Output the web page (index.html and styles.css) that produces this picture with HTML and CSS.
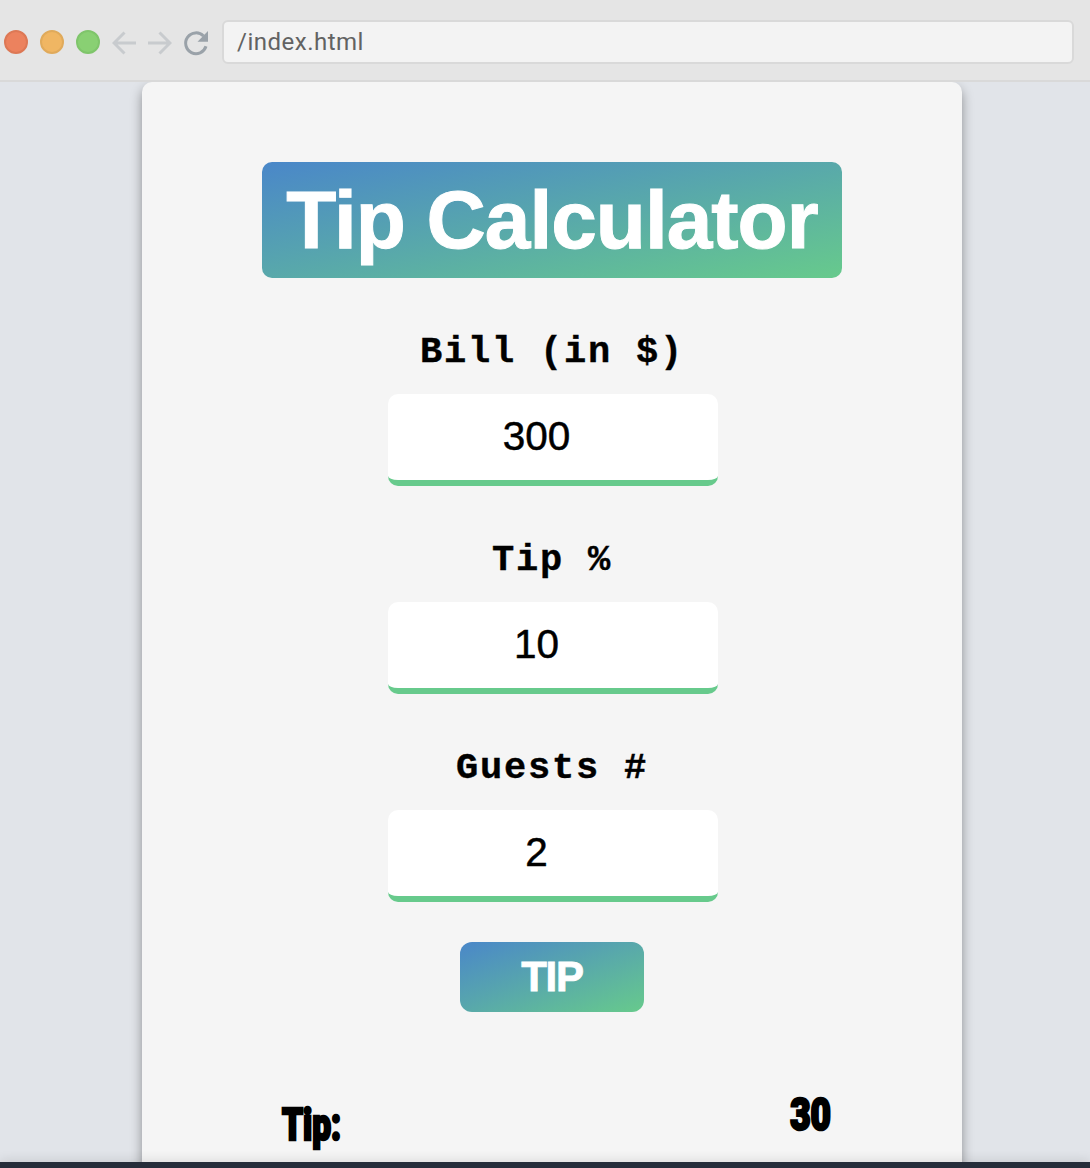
FILE: index.html
```html
<!DOCTYPE html>
<html lang="en">
<head>
<meta charset="utf-8">
<title>Tip Calculator</title>
<link rel="stylesheet" href="styles.css">
</head>
<body>
<header class="browser-bar">
  <span class="dot dot-red"></span>
  <span class="dot dot-yellow"></span>
  <span class="dot dot-green"></span>
  <svg class="nav-icon" viewBox="0 0 24 24"><path d="M24 12H2M12.500 1.500L2 12l10.500 10.500"/></svg>
  <svg class="nav-icon" viewBox="0 0 24 24"><path d="M0 12h22M11.500 1.500L22 12 11.500 22.500"/></svg>
  <svg class="reload-icon" viewBox="0 0 24 24"><path class="arc" d="M19.500 5A10.400 10.400 0 1 0 22 15.300"/><path class="head" d="M24 0v10.700H13.500z"/></svg>
  <div class="address">/index.html</div>
</header>
<main class="viewport">
  <section class="card">
    <h1 class="title">Tip Calculator</h1>
    <label class="label" for="bill">Bill (in $)</label>
    <input class="field" id="bill" value="300">
    <label class="label" for="tip">Tip %</label>
    <input class="field" id="tip" value="10">
    <label class="label" for="guests">Guests #</label>
    <input class="field" id="guests" value="2">
    <button class="button">TIP</button>
    <div class="result">
      <span class="result-name">Tip:</span>
      <span class="result-value">30</span>
    </div>
  </section>
</main>
<footer class="bottom-bar"></footer>
</body>
</html>
```
FILE: styles.css
```css
* { box-sizing: border-box; }

body {
  margin: 0;
  height: 1168px;
  display: flex;
  flex-direction: column;
  overflow: hidden;
  font-family: "Liberation Sans", Arial, sans-serif;
  color: #000;
}

.browser-bar {
  flex: none;
  height: 82px;
  display: flex;
  align-items: center;
  gap: 12px;
  padding: 4px 16px 0 4px;
  background: #e5e5e5;
  border-bottom: 2px solid #d9d9d9;
}

.dot {
  flex: none;
  width: 24px;
  height: 24px;
  border-radius: 50%;
  border: 2px solid;
}
.dot-red { background: #ec825e; border-color: #dd7855; }
.dot-yellow { background: #f0b663; border-color: #e0aa5b; }
.dot-green { background: #89d073; border-color: #7fc56b; }

.nav-icon, .reload-icon {
  flex: none;
  width: 24px;
  height: 24px;
  margin-top: 2px;
  fill: none;
}
.nav-icon { stroke: #c8cbce; stroke-width: 3; }
.reload-icon { overflow: visible; }
.arc { stroke: #9aa2a9; stroke-width: 3; }
.head { fill: #9aa2a9; }

.address {
  flex: 1;
  height: 44px;
  margin-left: 2px;
  padding-left: 13px;
  border: 2px solid #d9d9d9;
  border-radius: 6px;
  background: #f3f3f3;
  color: #626262;
  font: 24px/40px Roboto, sans-serif;
  letter-spacing: 0.5px;
}

.viewport {
  flex: 1;
  min-height: 0;
  overflow: hidden;
  padding: 0 128px 0 142px;
  background: #e1e4e9;
}

.card {
  height: 1200px;
  display: flex;
  flex-direction: column;
  align-items: center;
  padding-top: 80px;
  border-radius: 10px;
  background: #f5f5f5;
  box-shadow: 0 6px 12px rgba(0, 0, 0, 0.38);
}

.title {
  width: 580px;
  height: 116px;
  margin: 0 0 34px;
  border-radius: 10px;
  background: linear-gradient(to bottom right, #4a87c9, #67ca8c);
  color: #fff;
  font-size: 82px;
  font-weight: bold;
  line-height: 116px;
  letter-spacing: -1px;
  text-align: center;
  white-space: nowrap;
  -webkit-text-stroke: 1px #fff;
}

.label {
  height: 82px;
  font: bold 37px/80px "Courier New", "Liberation Mono", monospace;
  letter-spacing: 1.8px;
  -webkit-text-stroke: 0.4px #000;
}

.field {
  width: 330px;
  height: 92px;
  margin: 0 0 34px 2px;
  padding: 0 33px 1px 0;
  border: 0;
  border-bottom: 6px solid #67ca8c;
  border-radius: 10px;
  background: #fff;
  color: #000;
  font: 40.5px "Liberation Sans", Arial, sans-serif;
  text-align: center;
  -webkit-text-stroke: 0.5px #000;
}

.button {
  width: 184px;
  height: 70px;
  margin-top: 6px;
  padding: 0 0 1px;
  border: 0;
  border-radius: 12px;
  background: linear-gradient(to bottom right, #4a87c9, #67ca8c);
  color: #fff;
  font: bold 42px/68px "Liberation Sans", Arial, sans-serif;
  letter-spacing: -1.2px;
  -webkit-text-stroke: 0.8px #fff;
}

.result {
  width: 550px;
  display: flex;
  justify-content: space-between;
  margin-top: 76px;
  font: 900 44px/54px Impact, Roboto, sans-serif;
  -webkit-text-stroke: 2.6px #000;
}
.result-name {
  margin: 10px 0 0 5px;
  transform: scaleX(0.76);
  transform-origin: left;
}
.result-value {
  margin-right: -4px;
  transform: scaleX(0.8);
  transform-origin: right;
}

.bottom-bar {
  flex: none;
  position: relative;
  height: 6px;
  background: #252d3a;
  box-shadow: 0 0 12px rgba(0, 0, 0, 0.18);
}
```
